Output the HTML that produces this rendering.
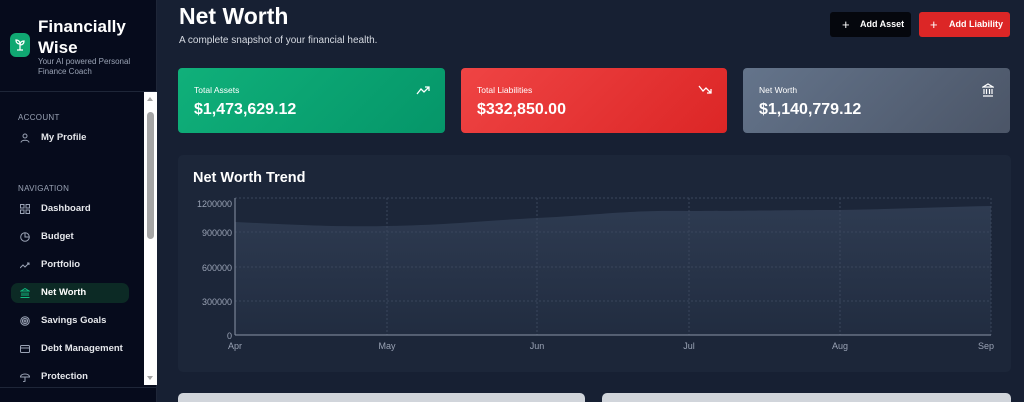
<!DOCTYPE html><html><head><style>
*{margin:0;padding:0;box-sizing:border-box}
html,body{width:1024px;height:402px;overflow:hidden}
body{background:#172033;font-family:"Liberation Sans",sans-serif;position:relative;color:#fff}
.sb{position:absolute;left:0;top:0;width:157px;height:402px;background:#060b1c;border-right:1px solid #1e2638}
.logo{position:absolute;left:10px;top:33px;width:20px;height:24px;background:#10a872;border-radius:6px}
.t1{position:absolute;left:38px;top:16px;font-size:17px;font-weight:bold;line-height:21px}
.t2{position:absolute;left:38px;top:57px;font-size:8px;color:#9aa3b5;line-height:10px}
.hr{position:absolute;left:0;width:157px;height:1px;background:#1e2638}
.sec{position:absolute;left:18px;font-size:8px;color:#9aa3b5;letter-spacing:.3px}
.it{position:absolute;left:11px;width:118px;height:20px;font-size:9.5px;font-weight:bold;color:#e5e7eb;padding-left:30px;line-height:20px}
.it svg{position:absolute;left:9px;top:5px}
.act{background:#0c2a25;border-radius:7px;color:#fff}
.scr{position:absolute;left:144px;top:92px;width:13px;height:293px;background:#fff}
.thumb{position:absolute;left:3px;top:20px;width:7px;height:127px;background:#a5a5a5;border-radius:4px}
h1{position:absolute;left:179px;top:3px;font-size:23px;font-weight:bold}
.sub{position:absolute;left:179px;top:35px;font-size:10px;color:#d6dae2}
.btn{position:absolute;top:12px;height:25px;border-radius:3px;font-size:9px;font-weight:bold;line-height:25px;padding-left:30px}
.card{position:absolute;top:68px;height:65px;border-radius:4px}
.card .l{position:absolute;left:16px;top:17px;font-size:8.5px}
.card .v{position:absolute;left:16px;top:33px;font-size:16px;font-weight:bold}
.chart{position:absolute;left:178px;top:155px;width:833px;height:217px;background:#1c2639;border-radius:5px}
.bot{position:absolute;top:393px;height:9px;background:#d1d5db;border-radius:5px 5px 0 0}
</style></head><body>
<div class="sb">
<div class="logo"><svg width="20" height="24" viewBox="0 0 20 24"><path d="M10 17V11M10 11C10 8 8 7 6 7C6 9 7 11 10 11M10 12C10 9 12 8 14 8C14 10 13 12 10 12M7 17H13" stroke="#fff" stroke-width="1.3" fill="none"/></svg></div>
<div class="t1">Financially<br>Wise</div>
<div class="t2">Your AI powered Personal<br>Finance Coach</div>
<div class="hr" style="top:91px"></div>
<div class="sec" style="top:113px">ACCOUNT</div>
<div class="it" style="top:128px"><svg width="10" height="10"><circle cx="5" cy="3" r="2" stroke="#9aa3b5" fill="none"/><path d="M1 9.5C1 6.5 9 6.5 9 9.5" stroke="#9aa3b5" fill="none"/></svg>My Profile</div>
<div class="sec" style="top:184px">NAVIGATION</div>
<div class="it" style="top:199px"><svg width="10" height="10"><g stroke="#9aa3b5" fill="none"><rect x=".5" y=".5" width="3.5" height="3.5"/><rect x="6" y=".5" width="3.5" height="3.5"/><rect x=".5" y="6" width="3.5" height="3.5"/><rect x="6" y="6" width="3.5" height="3.5"/></g></svg>Dashboard</div>
<div class="it" style="top:227px"><svg width="10" height="10"><circle cx="5" cy="5" r="4.3" stroke="#9aa3b5" fill="none"/><path d="M5 1V5H9" stroke="#9aa3b5" fill="none"/></svg>Budget</div>
<div class="it" style="top:255px"><svg width="10" height="10"><path d="M0 8L3 5L5 7L9 3M7 3H9V5" stroke="#9aa3b5" fill="none"/></svg>Portfolio</div>
<div class="it act" style="top:283px"><svg width="10" height="10"><path d="M1 3L5 .5L9 3ZM2 4.5V8M4 4.5V8M6 4.5V8M8 4.5V8M.5 9.5H9.5" stroke="#10b981" fill="none"/></svg>Net Worth</div>
<div class="it" style="top:311px"><svg width="10" height="10"><g stroke="#9aa3b5" fill="none"><circle cx="5" cy="5" r="4.3"/><circle cx="5" cy="5" r="2.6"/><circle cx="5" cy="5" r="1"/></g></svg>Savings Goals</div>
<div class="it" style="top:339px"><svg width="10" height="10"><rect x=".5" y="1.5" width="9" height="7" rx="1" stroke="#9aa3b5" fill="none"/><path d="M.5 4H9.5" stroke="#9aa3b5"/></svg>Debt Management</div>
<div class="it" style="top:367px"><svg width="10" height="10"><path d="M.5 5C.5 1 9.5 1 9.5 5ZM5 5V9C5 10 3.5 10 3.5 9" stroke="#9aa3b5" fill="none"/></svg>Protection</div>
<div class="scr"><div style="position:absolute;left:3px;top:5px;border:3.5px solid transparent;border-bottom:4px solid #a5a5a5;border-top:none"></div><div class="thumb"></div><div style="position:absolute;left:3px;bottom:5px;border:3.5px solid transparent;border-top:4px solid #a5a5a5;border-bottom:none"></div></div>
<div class="hr" style="top:387px"></div>
</div>
<h1>Net Worth</h1>
<div class="sub">A complete snapshot of your financial health.</div>
<div class="btn" style="left:830px;width:81px;background:#05070d">Add Asset<span style="position:absolute;left:12px;font-weight:normal;font-size:13px">+</span></div>
<div class="btn" style="left:919px;width:91px;background:#dc2626">Add Liability<span style="position:absolute;left:11px;font-weight:normal;font-size:13px">+</span></div>
<div class="card" style="left:178px;width:267px;background:linear-gradient(135deg,#10b07a,#059669)"><div class="l">Total Assets</div><div class="v">$1,473,629.12</div><svg style="position:absolute;right:15px;top:17px" width="14" height="10"><path d="M1 9L5 4L8 7L13 2M9 2H13V6" stroke="#fff" stroke-width="1.3" fill="none"/></svg></div>
<div class="card" style="left:461px;width:266px;background:linear-gradient(135deg,#ef4444,#dc2626)"><div class="l">Total Liabilities</div><div class="v">$332,850.00</div><svg style="position:absolute;right:15px;top:17px" width="14" height="10"><path d="M1 1L5 6L8 3L13 8M9 8H13V4" stroke="#fff" stroke-width="1.3" fill="none"/></svg></div>
<div class="card" style="left:743px;width:267px;background:linear-gradient(135deg,#64748b,#4b5567)"><div class="l">Net Worth</div><div class="v">$1,140,779.12</div><svg style="position:absolute;right:16px;top:15px" width="12" height="14"><path d="M1 4L6 1L11 4ZM2 6V11M4.5 6V11M7.5 6V11M10 6V11M1 13H11" stroke="#fff" stroke-width="1.2" fill="none"/></svg></div>
<div class="chart">
<div style="position:absolute;left:15px;top:15px;font-size:14.5px;font-weight:bold">Net Worth Trend</div>
<svg width="833" height="217" style="position:absolute;left:0;top:0" font-family="Liberation Sans" font-size="9" fill="#9aa3b5">
<defs><linearGradient id="g" x1="0" y1="0" x2="0" y2="1"><stop offset="0" stop-color="#2e3b51"/><stop offset="1" stop-color="#212c40"/></linearGradient></defs>
<path d="M57 67C120 70 150 72 209 71C270 70 300 66 359 63C420 60 450 55 511 56C580 56 600 55 662 55C720 54 760 52 813 51V180H57Z" fill="url(#g)"/>
<g stroke="#3a465c" stroke-dasharray="2 2"><line x1="57" y1="43" x2="813" y2="43"/><line x1="57" y1="77" x2="813" y2="77"/><line x1="57" y1="112" x2="813" y2="112"/><line x1="57" y1="146" x2="813" y2="146"/><line x1="209" y1="43" x2="209" y2="180"/><line x1="359" y1="43" x2="359" y2="180"/><line x1="511" y1="43" x2="511" y2="180"/><line x1="662" y1="43" x2="662" y2="180"/><line x1="813" y1="43" x2="813" y2="180"/></g>
<g stroke="#8a94a6"><line x1="57" y1="43" x2="57" y2="180"/><line x1="57" y1="180" x2="813" y2="180"/></g>
<g text-anchor="end"><text x="54" y="52">1200000</text><text x="54" y="81">900000</text><text x="54" y="116">600000</text><text x="54" y="150">300000</text><text x="54" y="184">0</text></g>
<g text-anchor="middle"><text x="57" y="194">Apr</text><text x="209" y="194">May</text><text x="359" y="194">Jun</text><text x="511" y="194">Jul</text><text x="662" y="194">Aug</text><text x="808" y="194">Sep</text></g>
</svg></div>
<div class="bot" style="left:178px;width:407px"></div>
<div class="bot" style="left:602px;width:409px"></div>
</body></html>
